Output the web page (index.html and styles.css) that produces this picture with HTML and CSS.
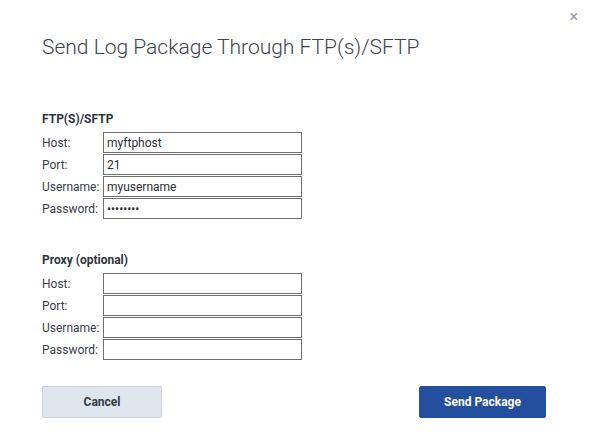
FILE: index.html
```html
<!DOCTYPE html>
<html lang="en">
<head>
<meta charset="utf-8">
<title>Send Log Package Through FTP(s)/SFTP</title>
<link rel="stylesheet" href="styles.css">
</head>
<body>
<div class="dialog">
  <button class="close" aria-label="Close">&times;</button>
  <h1 class="title">Send Log Package Through FTP(s)/SFTP</h1>

  <section class="section">
    <h2 class="section-title">FTP(S)/SFTP</h2>
    <div class="form-grid">
      <label class="label">Host:</label><input class="field" type="text" value="myftphost">
      <label class="label">Port:</label><input class="field" type="text" value="21">
      <label class="label">Username:</label><input class="field" type="text" value="myusername">
      <label class="label">Password:</label><input class="field" type="password" value="password">
    </div>
  </section>

  <section class="section proxy">
    <h2 class="section-title">Proxy (optional)</h2>
    <div class="form-grid">
      <label class="label">Host:</label><input class="field" type="text" value="">
      <label class="label">Port:</label><input class="field" type="text" value="">
      <label class="label">Username:</label><input class="field" type="text" value="">
      <label class="label">Password:</label><input class="field" type="password" value="">
    </div>
  </section>

  <div class="actions">
    <button class="btn btn-cancel">Cancel</button>
    <button class="btn btn-primary">Send Package</button>
  </div>
</div>
</body>
</html>
```

FILE: styles.css
```css
html, body {
  margin: 0;
  padding: 0;
  background: #ffffff;
}

body {
  font-family: Roboto, "Liberation Sans", sans-serif;
  color: #333a44;
}

.dialog {
  position: relative;
  padding: 33px 43px 0 42px;
}

.close {
  position: absolute;
  top: 9px;
  right: 11px;
  border: none;
  background: none;
  padding: 0;
  font-family: Roboto, "Liberation Sans", sans-serif;
  font-size: 16px;
  line-height: 15px;
  color: #8b9bb0;
  cursor: pointer;
}

.title {
  margin: 0 0 50px 0;
  font-size: 21px;
  line-height: 28px;
  font-weight: 300;
  color: #3d434d;
  letter-spacing: 0;
}

.section {
  margin: 0;
}

.proxy {
  margin-top: 33px;
}

.section-title {
  margin: 0 0 5px 0;
  font-size: 12px;
  line-height: 16px;
  font-weight: 700;
  color: #2f3540;
}

.form-grid {
  display: grid;
  grid-template-columns: 61px 199px;
  row-gap: 1px;
  align-items: center;
}

.label {
  font-size: 12px;
  line-height: 16px;
  color: #3a404a;
  white-space: nowrap;
}

.field {
  box-sizing: border-box;
  width: 199px;
  height: 21px;
  margin: 0;
  padding: 0 3px;
  border: 1px solid #707070;
  border-radius: 0;
  background: #ffffff;
  font-family: Roboto, "Liberation Sans", sans-serif;
  font-size: 12px;
  color: #2b2f36;
  outline: none;
}

.actions {
  display: flex;
  justify-content: space-between;
  margin-top: 26px;
}

.btn {
  box-sizing: border-box;
  height: 32px;
  border-radius: 2px;
  font-family: Roboto, "Liberation Sans", sans-serif;
  font-size: 12px;
  font-weight: 700;
  cursor: pointer;
}

.btn-cancel {
  width: 120px;
  background: #dfe5ed;
  border: 1px solid #cdd4dd;
  color: #343b46;
}

.btn-primary {
  width: 127px;
  background: #244f9e;
  border: 1px solid #244f9e;
  color: #ffffff;
}
```
